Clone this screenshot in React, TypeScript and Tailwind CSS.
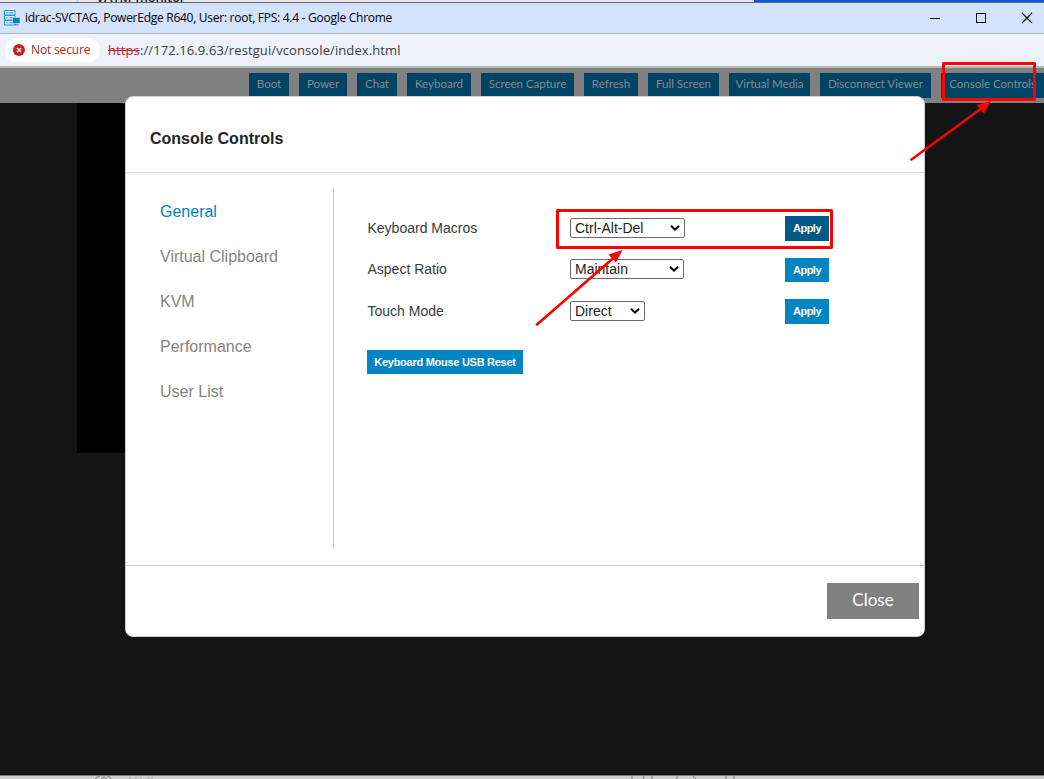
import React from "react";

const topButtons = [
  { label: "Boot", w: "w-[40px]" },
  { label: "Power", w: "w-[48px]" },
  { label: "Chat", w: "w-[40px]" },
  { label: "Keyboard", w: "w-[64px]" },
  { label: "Screen Capture", w: "w-[93px]" },
  { label: "Refresh", w: "w-[54px]" },
  { label: "Full Screen", w: "w-[71px]" },
  { label: "Virtual Media", w: "w-[81px]" },
  { label: "Disconnect Viewer", w: "w-[111px]" },
  { label: "Console Controls", w: "w-[103px]" },
];

const navItems = ["General", "Virtual Clipboard", "KVM", "Performance", "User List"];

const rows = [
  { label: "Keyboard Macros", value: "Ctrl-Alt-Del", w: "w-[115px]", h: "h-[41px]", btn: "bg-[#005a87] h-[25px]" },
  { label: "Aspect Ratio", value: "Maintain", w: "w-[114px]", h: "h-[42px]", btn: "bg-[#0085c3] h-[24px] mt-[1px]" },
  { label: "Touch Mode", value: "Direct", w: "w-[75px]", h: "h-[51px]", btn: "bg-[#0085c3] h-[25px]" },
];

function BackgroundTop() {
  return (
    <div className="flex h-[2px] shrink-0 overflow-hidden bg-[#e6e6e6]">
      <div className="h-full w-[78px] border-r border-[#cccccc]" />
      <div className="h-full w-[676px] overflow-hidden pl-[18px] font-['Open_Sans',sans-serif] text-[13px] font-semibold">
        <span className="-mt-[10px] block leading-[14px] tracking-[-0.15px] text-[#222]">VATM-monitor</span>
      </div>
      <div className="h-full flex-1 bg-[#0a5bdc]" />
    </div>
  );
}

function TitleBar() {
  return (
    <div className="flex h-[32px] shrink-0 items-center border-t border-b border-t-[#5f6672] border-b-[#b0b3b8] bg-[#d3e3fd]">
      <svg className="ml-[4px] h-[16px] w-[16px] shrink-0" viewBox="0 0 16 16">
        <path d="M.5 .5h10.500v4.500H.5zM.5 5.500h10.500v4.500H.5zM.5 10.500h10.500v4.500H.5z" fill="#e8f4fd" stroke="#2b93cb" />
        <path d="M2 2.800h1.500M4.500 2.800h5M2 7.800h1.500M4.500 7.800h5M2 12.800h1.500M4.500 12.800h5" stroke="#2b93cb" />
        <path d="M8.500 7.500h7.500v6H8.500z" fill="#0f7fbb" stroke="#d3e3fd" strokeWidth=".6" />
        <path d="M10.500 14.800h4" stroke="#0f7fbb" />
      </svg>
      <span className="ml-[5px] whitespace-nowrap font-['Open_Sans',sans-serif] text-[12px] leading-none tracking-[-0.27px] text-black">
        idrac-SVCTAG, PowerEdge R640, User: root, FPS: 4.4 - Google Chrome
      </span>
      <svg className="ml-auto h-[12px] w-[104px] shrink-0" viewBox="0 0 104 12" fill="none" stroke="#000">
        <path d="M0 6.500h10M46.500 1.500h9v9h-9z" shapeRendering="crispEdges" />
        <path d="M92 1l10 10M102 1L92 11" strokeWidth="1.100" />
      </svg>
      <div className="w-[10px]" />
    </div>
  );
}

function AddressBar() {
  return (
    <div className="flex h-[34px] shrink-0 items-center border-b-2 border-[#b6b6b6] bg-[#edf1fa] font-['Open_Sans',sans-serif]">
      <div className="ml-[5px] flex h-[24px] w-[95px] items-center rounded-full bg-white pl-[8px]">
        <svg className="h-[12px] w-[12px]" viewBox="0 0 12 12">
          <circle cx="6" cy="6" r="6" fill="#c5221f" />
          <path d="M4 4l4 4M8 4l-4 4" stroke="#fff" strokeWidth="1.400" />
        </svg>
        <span className="ml-[6px] whitespace-nowrap text-[12px] leading-none tracking-[-0.15px] text-[#b3261e]">Not secure</span>
      </div>
      <div className="ml-[8px] whitespace-nowrap text-[13px] leading-none tracking-[0.1px] text-[#3c4043]">
        <span className="text-[#c5221f] line-through">https</span>://172.16.9.63/restgui/vconsole/index.html
      </div>
    </div>
  );
}

function Toolbar() {
  return (
    <div className="flex h-[35px] shrink-0 gap-[10px] overflow-hidden bg-[#808080] pt-[5px] pl-[249px]">
      {topButtons.map((b) => (
        <div key={b.label} className={`flex h-[25px] shrink-0 justify-center bg-[#004363] pt-[4px] font-['Lato',sans-serif] text-[11.5px] leading-[14px] whitespace-nowrap text-[#868b8d] ${b.w}`}>
          {b.label}
        </div>
      ))}
    </div>
  );
}

function Select({ value, width }: { value: string; width: string }) {
  return (
    <div className={`mt-[2px] flex h-[20px] items-center rounded-[2px] border border-[#6b6b6b] bg-white pr-[4px] pl-[4px] ${width}`}>
      <span className="text-[14px] leading-[18px] text-[#222]">{value}</span>
      <svg className="ml-auto h-[6px] w-[10px]" viewBox="0 0 10 6" fill="none">
        <path d="M1 .8l4 3.800 4-3.800" stroke="#000" strokeWidth="2" />
      </svg>
    </div>
  );
}

function Dialog() {
  return (
    <div className="absolute top-[96px] left-[125px] flex h-[541px] w-[800px] flex-col rounded-[8px] border border-[#cfcfcf] bg-white">
      <div className="flex h-[76px] shrink-0 items-center border-b border-[#dcdce6] pt-[8px] pl-[24px] text-[16px] font-bold text-[#212529]">
        Console Controls
      </div>
      <div className="flex h-[393px] shrink-0 border-b border-[#cccccc]">
        <div className="mt-[16px] flex h-[360px] w-[208px] flex-col border-r border-[#cccccc] pl-[34px]">
          {navItems.map((n, i) => (
            <div key={n} className={`flex h-[45px] items-center text-[16px] ${i === 0 ? "text-[#0080c8]" : "text-[#848484]"}`}>
              {n}
            </div>
          ))}
        </div>
        <div className="flex flex-col pt-[43px] pl-[33px]">
          {rows.map((r) => (
            <div key={r.label} className={`flex items-start ${r.h}`}>
              <div className="w-[203px] pt-[2px] pl-[0.5px] text-[14px] leading-[20px] text-[#3a3a3e]">{r.label}</div>
              <div className="w-[215px]">
                <Select value={r.value} width={r.w} />
              </div>
              <div className={`flex w-[44px] items-center justify-center text-[11px] font-bold tracking-[-0.5px] text-white ${r.btn}`}>Apply</div>
            </div>
          ))}
          <div className="flex h-[24px] w-[156px] items-center justify-center bg-[#0085c3] text-[11px] font-bold tracking-[-0.27px] whitespace-nowrap text-white">
            Keyboard Mouse USB Reset
          </div>
        </div>
      </div>
      <div className="flex justify-end pt-[17px] pr-[5px]">
        <div className="flex h-[36px] w-[92px] items-center justify-center bg-[#808080] pb-[2px] font-['Lato',sans-serif] text-[17px] text-white">
          Close
        </div>
      </div>
    </div>
  );
}

function Annotations() {
  return (
    <svg className="pointer-events-none absolute top-0 left-0 h-[779px] w-[1044px]" viewBox="0 0 1044 779" fill="none" stroke="#ff0000">
      <rect x="943.500" y="63.500" width="91" height="36" strokeWidth="3" strokeLinejoin="round" />
      <rect x="557.500" y="210.500" width="274" height="37" strokeWidth="3" strokeLinejoin="round" />
      <path d="M911.500 159.500L982 108M537 324.500L614 257.500" strokeWidth="2.600" strokeLinecap="round" />
      <path d="M991 101L984 113.500L976.500 105ZM622.500 250L616 262.500L608.500 254.500Z" fill="#ff0000" stroke="none" />
    </svg>
  );
}

function BackgroundBottom() {
  return (
    <div className="h-[4px] shrink-0 overflow-hidden border-t border-[#777] bg-[#cecece]">
      <svg className="block h-[3px] w-[1044px]" viewBox="0 0 1044 3" fill="none" stroke="#777">
        <path d="M95 3q2-3 5-3M107 0q3 0 4 3M101 3q3-4 6 0M632 0v3M643 3l1-3M652 0v3M676 3l2-3M693 0l3 3M726 0v3M734 0v3" />
        <path d="M130 1.500v2M136 1.500v2M141 1.500v2M148 1.500v2M152 1.500v2" stroke="#8f8f9b" />
      </svg>
    </div>
  );
}

export default function App() {
  return (
    <div className="relative flex h-[779px] w-[1044px] flex-col overflow-hidden bg-[#141414] font-['Liberation_Sans',Arial,sans-serif]">
      <BackgroundTop />
      <TitleBar />
      <AddressBar />
      <Toolbar />
      <div className="flex-1 bg-[#141414] pl-[77px]">
        <div className="h-[350px] w-[400px] bg-black" />
      </div>
      <BackgroundBottom />
      <Dialog />
      <Annotations />
    </div>
  );
}
